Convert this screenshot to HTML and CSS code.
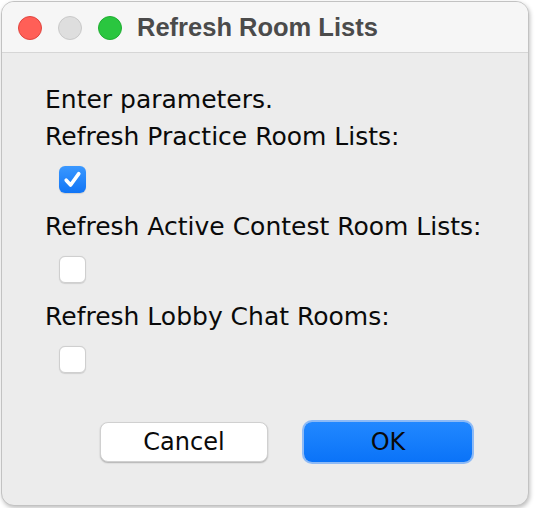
FILE: index.html
```html
<!DOCTYPE html>
<html>
<head>
<meta charset="utf-8">
<link rel="stylesheet" href="styles.css">
</head>
<body>
<div class="window">
  <div class="titlebar">
    <span class="light red"></span>
    <span class="light gray"></span>
    <span class="light green"></span>
    <span class="title">Refresh Room Lists</span>
  </div>
  <div class="content">
    <div class="line intro">Enter parameters.</div>
    <div class="line">Refresh Practice Room Lists:</div>
    <div class="check checked">
      <svg width="27" height="27" viewBox="0 0 27 27"><path d="M7.2 14.2 L11.6 19 L19.8 7.6" fill="none" stroke="#fff" stroke-width="3.6" stroke-linecap="round" stroke-linejoin="round"/></svg>
    </div>
    <div class="line">Refresh Active Contest Room Lists:</div>
    <div class="check"></div>
    <div class="line">Refresh Lobby Chat Rooms:</div>
    <div class="check"></div>
    <div class="buttons">
      <button class="btn cancel">Cancel</button>
      <button class="btn ok">OK</button>
    </div>
  </div>
</div>
</body>
</html>
```

FILE: styles.css
```css
html, body {
  margin: 0;
  padding: 0;
  background: #ffffff;
}
body {
  width: 536px;
  height: 508px;
  overflow: hidden;
}
.window {
  box-sizing: border-box;
  margin: 1px 0 0 1px;
  width: 528px;
  height: 505px;
  border: 1px solid #c2c2c2;
  border-radius: 13px;
  background: #ececec;
  overflow: hidden;
  box-shadow: 1px 2px 4px rgba(0,0,0,0.25);
}
.titlebar {
  height: 50px;
  background: #f6f6f6;
  border-bottom: 1px solid #d6d6d6;
  display: flex;
  align-items: center;
  padding-left: 16px;
  gap: 16px;
}
.light {
  box-sizing: border-box;
  width: 24px;
  height: 24px;
  border-radius: 50%;
  margin-top: 2px;
}
.red { background: #ff5f57; border: 1px solid #e1453f; }
.gray { background: #dedede; border: 1px solid #c9c9c9; }
.green { background: #2ac63f; border: 1px solid #1fae31; }
.title {
  margin-left: -1px;
  font-family: "Liberation Sans", Arial, sans-serif;
  font-weight: bold;
  font-size: 25.5px;
  color: #4b4b4b;
}
.content {
  display: flex;
  flex-direction: column;
  align-items: flex-start;
  padding: 33px 0 0 43px;
  font-family: "DejaVu Sans", sans-serif;
  font-size: 25px;
  color: #0a0a0a;
}
.line {
  line-height: 28px;
  height: 28px;
  white-space: nowrap;
}
.intro { margin-bottom: 9px; }
.check {
  box-sizing: border-box;
  width: 27px;
  height: 27px;
  border-radius: 6px;
  margin: 15px 0 20px 14px;
  background: #fff;
  border: 1px solid #cfcfcf;
  box-shadow: 0 0.5px 1px rgba(0,0,0,0.12);
}
.check svg { display: block; }
.check.checked {
  border: none;
  background: linear-gradient(#3a98ff, #1175f6);
}
.buttons {
  display: flex;
  gap: 36px;
  margin: 29px 0 0 55px;
}
.btn {
  box-sizing: border-box;
  width: 168px;
  height: 40px;
  border-radius: 8px;
  font-family: "DejaVu Sans", sans-serif;
  font-size: 24px;
  color: #0a0a0a;
  padding: 0;
}
.cancel {
  background: #fff;
  border: 0.5px solid #d0d0d0;
  box-shadow: 0 1px 1.5px rgba(0,0,0,0.25);
}
.ok {
  background: linear-gradient(#2288ff, #0a73f8);
  border: none;
  box-shadow: 0 0 0 2px rgba(110,170,250,0.75);
}
```
